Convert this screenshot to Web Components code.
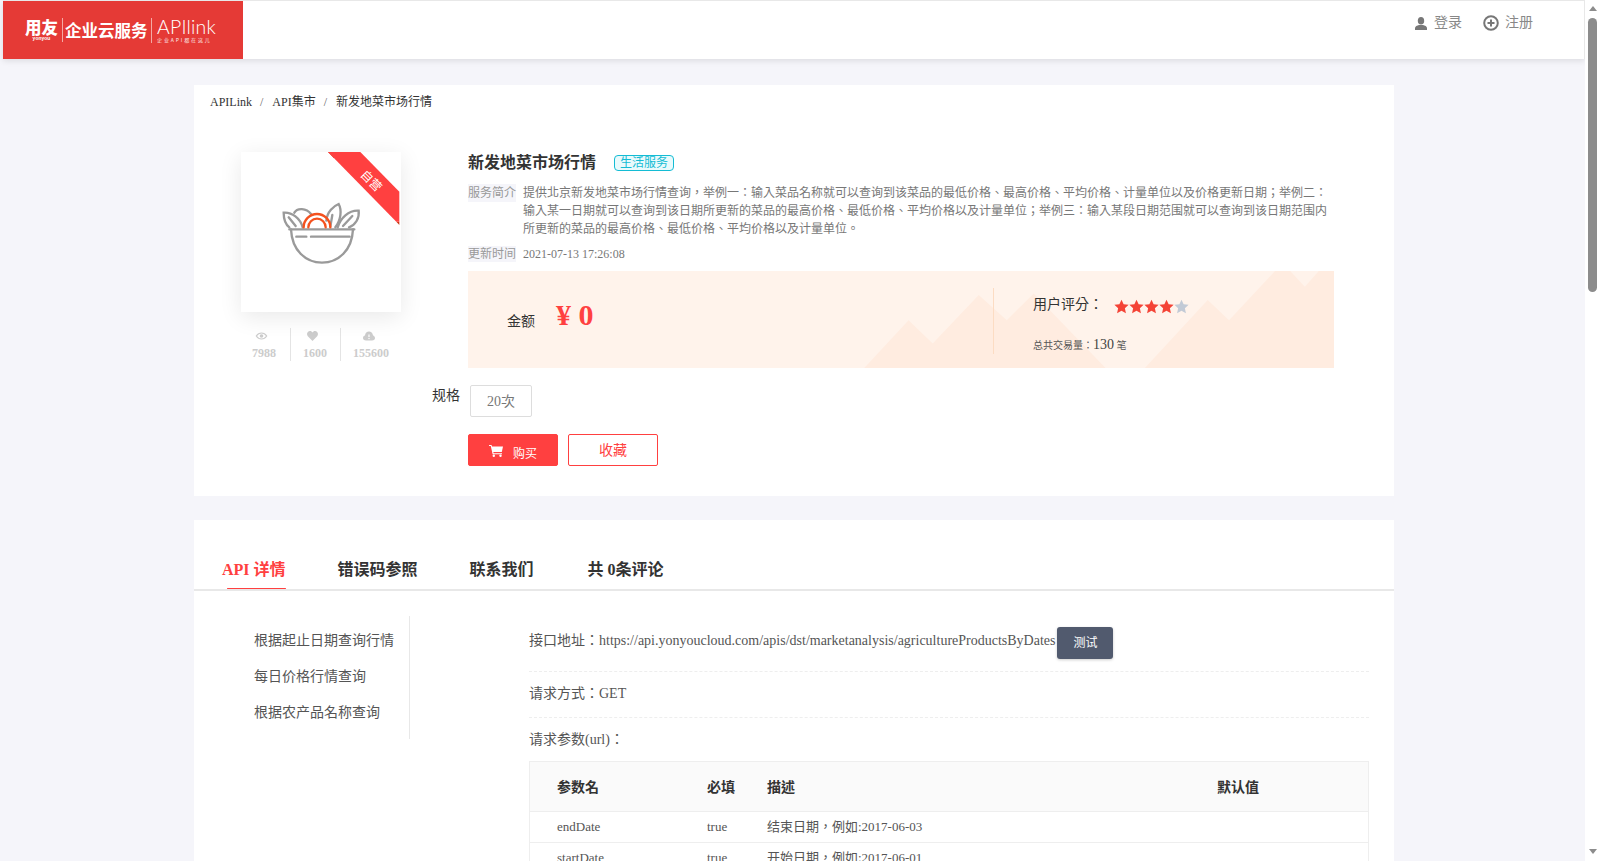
<!DOCTYPE html>
<html lang="zh-TW"><head><meta charset="utf-8"><title>APILink</title>
<style>
html,body{margin:0;height:861px;overflow:hidden;background:#f5f5fa;font-family:"Liberation Serif","Noto Sans CJK TC",serif;color:#333}
#root{display:flex;height:861px}
#page{flex:1;min-width:0;height:861px;overflow:hidden}
</style></head><body>
<div id="root"><div id="page">
<x-header></x-header>
<x-product></x-product>
<x-detail></x-detail>
</div><x-scrollbar></x-scrollbar></div>
<script>
function def(name,html){customElements.define(name,class extends HTMLElement{constructor(){super();this.attachShadow({mode:'open'}).innerHTML=html}})}
def('x-logo',`<style>
:host{display:flex;align-items:center;width:240px;height:58px;background:#e53a36;color:#fff;box-sizing:border-box;padding-left:22px;font-family:"Noto Sans CJK SC",sans-serif}
.yy{display:flex;flex-direction:column;align-items:center;width:33px}
.yy b{font-size:16.5px;line-height:17px;font-weight:900;white-space:nowrap}
.yy i{font:700 5px/5px "Liberation Sans",sans-serif}
.s1{width:1px;height:24px;background:#f4a9a5;margin:0 3px 0 4px}
.qy{font-size:16.500px;font-weight:700;white-space:nowrap;width:86px;margin-left:-1px}
.s2{width:1px;height:25px;background:#f4a9a5;margin-right:5px}
.api{display:flex;flex-direction:column}
.api b{font:300 19.500px/19px Lato,sans-serif;white-space:nowrap;letter-spacing:.2px}
.api i{font-style:normal;font-size:5px;line-height:7px;letter-spacing:1.900px;white-space:nowrap;opacity:.9}
</style><div class="yy"><b>用友</b><i>yonyou</i></div><div class="s1"></div><div class="qy" lang="zh-CN">企业云服务</div><div class="s2"></div><div class="api"><b>APIlink</b><i>企业API都在这儿</i></div>`);
def('x-header',`<style>
:host{display:flex;justify-content:space-between;height:59px;box-sizing:border-box;margin:0 0 26px 3px;background:#fff;border-top:1px solid #e8e8e8;border-right:1px solid #e8e8e8;box-shadow:0 2px 6px rgba(0,0,0,.1);font-size:14px;color:#888}
nav{display:flex;align-items:flex-start;padding:14px 51px 0 0}
a{display:flex;align-items:center;height:16px;line-height:16px}
svg{display:block;margin-right:7px}
.r{margin-left:21px}.r svg{margin-right:6px}
</style><x-logo></x-logo><nav>
<a><svg width="12" height="13" viewBox="0 0 12 13" fill="#777"><ellipse cx="6" cy="3.8" rx="3.2" ry="3.8"/><path d="M0 13v-2c0-1.6 2.2-2.6 4-3h4c1.8.4 4 1.4 4 3v2z"/></svg><span>登录</span></a>
<a class="r"><svg width="16" height="16" viewBox="0 0 16 16" fill="none" stroke="#777"><circle cx="8" cy="8" r="6.8" stroke-width="2"/><path d="M8 4.5v7M4.5 8h7" stroke-width="2"/></svg><span>注册</span></a>
</nav>`);
def('x-scrollbar',`<style>
:host{display:flex;flex-direction:column;align-items:center;width:15px;height:861px;background:#fff;box-sizing:border-box;padding-top:6px}
.u,.d{width:0;height:0;border-left:4.5px solid transparent;border-right:4.5px solid transparent}
.u{border-bottom:5px solid #8c8c8c}.d{border-top:5px solid #8c8c8c}
.t{width:9px;height:274px;margin-top:7px;background:#8c8c8c;border-radius:5px}
.f{flex:1}.d{margin-bottom:7px}
</style><div class="u"></div><div class="t"></div><div class="f"></div><div class="d"></div>`);
def('x-crumbs',`<style>
:host{display:flex;font-size:12px;line-height:16px;padding:9px 0 0 16px;color:#333;white-space:pre}
.s{color:#666;margin:0 9px 0 8px}
.s+span+.s{margin-right:9px}
</style><span>APILink</span><span class="s">/</span><span>API集市</span><span class="s">/</span><span>新发地菜市场行情</span>`);
def('x-cover',`<style>
:host{display:block;position:relative;width:160px;height:160px;background:#fff;box-shadow:0 5px 22px rgba(0,0,0,.09)}
svg{display:block;position:absolute;left:0;top:0}
span{position:absolute;left:118px;top:21px;width:24px;font-size:12px;line-height:16px;color:#fff;text-align:center;white-space:nowrap;transform:rotate(45deg)}
</style>
<svg width="160" height="160" viewBox="62 36 480 480" fill="none" stroke-linecap="round">
<g stroke="#9a9a9a" stroke-width="7">
<path d="M207 268H402M228 290H258M272 290H388"/>
<path d="M212 268C215 330 255 368 305 368C355 368 395 330 398 268"/>
<path d="M207 262C192 250 190 232 190 218C215 216 240 235 247 262M205 232L226 258"/>
<path d="M222 218C230 203 258 203 272 222"/>
<path d="M318 242C320 215 340 198 355 192C365 210 362 240 345 262M336 225L330 260"/>
<path d="M352 262C360 235 385 210 415 212C418 235 405 255 386 262M396 228L368 258"/>
</g>
<g stroke="#f4511e" stroke-width="7"><path d="M250 262A40 40 0 0 1 330 262M264 262A26 26 0 0 1 316 262"/></g>
<polygon points="323,36 341,36 341,55" fill="#c9350f" stroke="none"/>
<polygon points="528,245 537,245 537,255" fill="#c9350f" stroke="none"/>
<polygon points="323,36 420,36 537,155 537,245 528,245" fill="#ff4040" stroke="none"/>
</svg><span>自营</span>`);
def('x-stats',`<style>
:host{display:flex;margin-top:16px;width:160px;height:33px;color:#ccc;font-size:12px;font-weight:700;line-height:14px}
div{box-sizing:border-box;padding:2px 0 0 12px;width:50px;border-right:1px solid #e4e4e4}
div:nth-child(2){padding-left:11px}
div:last-child{border:0;width:auto}
p{display:inline-flex;flex-direction:column;align-items:center;margin:0}
svg{display:block;margin:0 5px 5px 0}
</style>
<div><p><svg width="13" height="10" viewBox="0 0 12 10" fill="none" stroke="#ccc"><path d="M.8 5C3.5 1 8.5 1 11.2 5C8.5 9 3.5 9 .8 5Z" stroke-width="1.2"/><circle cx="6" cy="5" r="1.8" fill="#ccc" stroke="none"/></svg><span>7988</span></p></div>
<div><p><svg width="11" height="10" viewBox="0 0 11 10" fill="#ccc"><path d="M5.5 10L.8 5.2C-1 3 .6 0 3 0c1.1 0 2 .6 2.5 1.5C6 .6 6.9 0 8 0c2.4 0 4 3 2.2 5.2z"/></svg><span>1600</span></p></div>
<div><p><svg width="12" height="10" viewBox="0 0 12 10"><path fill="#ccc" d="M3 9.5C1 9.5 0 8.2 0 7c0-1.3.9-2.3 2-2.5C2.2 2 4 .5 6 .5s3.700 1.400 4 3.900c1.200.200 2 1.300 2 2.600 0 1.300-1 2.500-3 2.500z"/><path d="M6 3.500v2.500" stroke="#fff" stroke-width="1.200"/><circle cx="6" cy="7.500" r=".7" fill="#fff"/></svg><span>155600</span></p></div>`);
def('x-banner',`<style>
:host{display:flex;position:relative;width:866px;height:97px;background:#fff3eb;color:#333;overflow:hidden}
svg{position:absolute;left:0;top:0;width:100%;height:100%}
.l,.r{position:relative}
.l{display:flex;width:525px;box-sizing:border-box;padding:24px 0 0 39px;height:100%}
.l .m{font-size:14px;line-height:20px;margin-top:17px}
.l b{font-size:30px;line-height:40px;color:#ff4040;margin-left:21px;white-space:pre;font-weight:700}
.dv{position:relative;width:1px;height:66px;margin-top:17px;background:#fcdcc3}
.r{padding:24px 0 0 39px}
.u{display:flex;font-size:14px;line-height:20px;align-items:center}
.st{display:flex;margin:3px 0 0 11px}
.st svg{position:static;width:15px;height:15px;display:block}
.t{font-size:10px;line-height:20px;margin-top:20px;color:#555;white-space:pre}
.t em{font-style:normal;font-size:14px;color:#444}
</style>
<svg viewBox="0 0 1543 290" preserveAspectRatio="none" fill="#ffece0"><path d="M706 290L785 147L828 217L910 72L960 147L1008 67L1136 290ZM1206 290L1318 87L1356 147L1438 0H1465L1491 47L1516 0H1543V290Z"/></svg>
<div class="l"><span class="m">金额</span><b>¥ 0</b></div><div class="dv"></div>
<div class="r"><div class="u"><span>用户评分：</span><span class="st">
<svg viewBox="0 0 24 24" fill="#f44336"><path d="M12 1l3.400 7.400 8 .9-6 5.500 1.700 8L12 18.700 4.900 22.800l1.700-8-6-5.500 8-.9z"/></svg>
<svg viewBox="0 0 24 24" fill="#f44336"><path d="M12 1l3.400 7.400 8 .9-6 5.500 1.700 8L12 18.700 4.900 22.800l1.700-8-6-5.500 8-.9z"/></svg>
<svg viewBox="0 0 24 24" fill="#f44336"><path d="M12 1l3.400 7.400 8 .9-6 5.500 1.700 8L12 18.700 4.900 22.800l1.700-8-6-5.500 8-.9z"/></svg>
<svg viewBox="0 0 24 24" fill="#f44336"><path d="M12 1l3.400 7.400 8 .9-6 5.500 1.700 8L12 18.700 4.900 22.800l1.700-8-6-5.500 8-.9z"/></svg>
<svg viewBox="0 0 24 24" fill="#c2cad6"><path d="M12 1l3.400 7.400 8 .9-6 5.500 1.700 8L12 18.700 4.900 22.800l1.700-8-6-5.500 8-.9z"/></svg>
</span></div><div class="t">总共交易量：<em>130</em> 笔</div></div>`);
def('x-product',`<style>
:host{display:block;width:1200px;height:411px;margin:0 0 24px 194px;background:#fff;overflow:hidden}
.main{display:flex;margin-top:42px}
.left{width:191px;padding-left:47px}
.right{flex:1;min-width:0}
.in{padding-left:36px}
.title{display:flex;align-items:center;height:22px}
h1{margin:0;font-size:16px;font-weight:700;color:#333;line-height:22px}
.tag{box-sizing:border-box;height:16px;margin-left:18px;padding:0 5px;border:1px solid #14bcd4;border-radius:4px;background:#e9fafc;color:#14bcd4;font-size:12px;line-height:14px;white-space:nowrap}
.row{display:flex;font-size:12px;color:#777}
.lab{flex:none;width:48px;height:18px;line-height:18px;background:#f5f5fa;color:#999;margin-right:7px;white-space:nowrap}
.d{margin-top:10px}.d p{margin:0;line-height:18px;white-space:nowrap;height:55px}
.tm{margin-top:7px;height:16px;line-height:16px;margin-bottom:9px}
.tm .lab{height:16px;line-height:16px}
.spec{display:flex;margin-top:17px;font-size:14px}
.spec span{line-height:22px}
.spec button{width:62px;height:32px;margin-left:10px;padding:0 0 3px;background:#fff;border:1px solid #ddd;border-radius:2px;font:inherit;color:#777}
.act{display:flex;margin-top:17px}
.b{display:flex;align-items:center;justify-content:center;box-sizing:border-box;width:90px;height:32px;border-radius:2px;border:1px solid #ff4040}
.buy{background:#ff4040;color:#fff;font-size:12px;padding-top:6px}
.buy svg{margin:-5px 10px 0 0;display:block}
.fav{margin-left:10px;color:#ff4040;font-size:14px;padding-bottom:2px}
</style>
<x-crumbs></x-crumbs>
<div class="main"><div class="left"><x-cover></x-cover><x-stats></x-stats></div>
<div class="right"><div class="in">
<div class="title"><h1>新发地菜市场行情</h1><span class="tag">生活服务</span></div>
<div class="row d"><span class="lab">服务简介</span><p>提供北京新发地菜市场行情查询，举例一：输入菜品名称就可以查询到该菜品的最低价格、最高价格、平均价格、计量单位以及价格更新日期；举例二：<br>输入某一日期就可以查询到该日期所更新的菜品的最高价格、最低价格、平均价格以及计量单位；举例三：输入某段日期范围就可以查询到该日期范围内<br>所更新的菜品的最高价格、最低价格、平均价格以及计量单位。</p></div>
<div class="row tm"><span class="lab">更新时间</span><span>2021-07-13 17:26:08</span></div>
<x-banner></x-banner></div>
<div class="spec"><span>规格</span><button>20次</button></div>
<div class="in act"><div class="b buy"><svg width="14" height="12" viewBox="0 0 14 12" fill="#fff"><path d="M0 0h2.500l.5 1.500h11l-1.200 5.500H4.300l.3 1.200h8.400v1H3.600L1.800 1H0z"/><circle cx="4.800" cy="10.800" r="1.200"/><circle cx="11.500" cy="10.800" r="1.200"/></svg><span>购买</span></div><div class="b fav">收藏</div></div>
</div></div>`);
def('x-tabs',`<style>
:host{display:flex;gap:52px;height:71px;box-sizing:border-box;padding:37.500px 0 0 28px;border-bottom:2px solid #e8e8e8;font-size:16px;font-weight:700;line-height:24px;color:#333}
div{display:flex;flex-direction:column;white-space:pre}
div:last-child{margin-left:2px}
.a{color:#ff4040}
.a i{display:block;height:3px;margin:6.500px 0 0 5px;background:#ff4040;border-radius:2px}
</style><div class="a">API 详情<i></i></div><div>错误码参照</div><div>联系我们</div><div>共 0条评论</div>`);
def('x-side',`<style>
:host{display:block;flex:none;width:216px;height:123px;box-sizing:border-box;margin-top:25px;padding:7px 0 0 60px;border-right:1px solid #e8e8e8;font-size:14px;line-height:36px;color:#555;white-space:nowrap}
div{height:36px}
</style><div>根据起止日期查询行情</div><div>每日价格行情查询</div><div>根据农产品名称查询</div>`);
def('x-table',`<style>
:host{display:block;border:1px solid #eee;border-bottom:0;margin-top:9px;color:#555;font-size:13px}
.r{display:grid;grid-template-columns:150px 60px 450px 1fr;padding-left:27px;height:30px;line-height:29px;border-bottom:1px solid #eee;box-sizing:content-box}
.h{height:49px;line-height:51px;background:#fafafa;font-size:14px;font-weight:700;color:#333}
</style>
<div class="r h"><span>参数名</span><span>必填</span><span>描述</span><span>默认值</span></div>
<div class="r"><span>endDate</span><span>true</span><span>结束日期，例如:2017-06-03</span><span></span></div>
<div class="r"><span>startDate</span><span>true</span><span>开始日期，例如:2017-06-01</span><span></span></div>`);
def('x-api',`<style>
:host{display:block;width:840px;margin:26px 0 0 119px;font-size:14px;color:#555}
.a{display:flex;align-items:flex-start;padding:10px 0 12px;border-bottom:1px dashed #eee;white-space:nowrap;line-height:26px}
.a span{margin-top:1px}
button{width:56px;height:32px;margin-left:2px;padding:0;background:#515a6e;border:0;border-radius:3px;color:#fff;font:inherit;font-size:12px;box-shadow:0 1px 3px rgba(0,0,0,.2)}
.b{padding:10px 0 11px;line-height:24px;border-bottom:1px dashed #eee}
.c{padding-top:10px;line-height:24px}
</style>
<div class="a"><span>接口地址：https://api.yonyoucloud.com/apis/dst/marketanalysis/agricultureProductsByDates</span><button>测试</button></div>
<div class="b">请求方式：GET</div>
<div class="c">请求参数(url)：</div>
<x-table></x-table>`);
def('x-detail',`<style>
:host{display:block;width:1200px;height:400px;margin-left:194px;background:#fff;overflow:hidden}
.m{display:flex}
</style><x-tabs></x-tabs><div class="m"><x-side></x-side><x-api></x-api></div>`);
</script></body></html>
